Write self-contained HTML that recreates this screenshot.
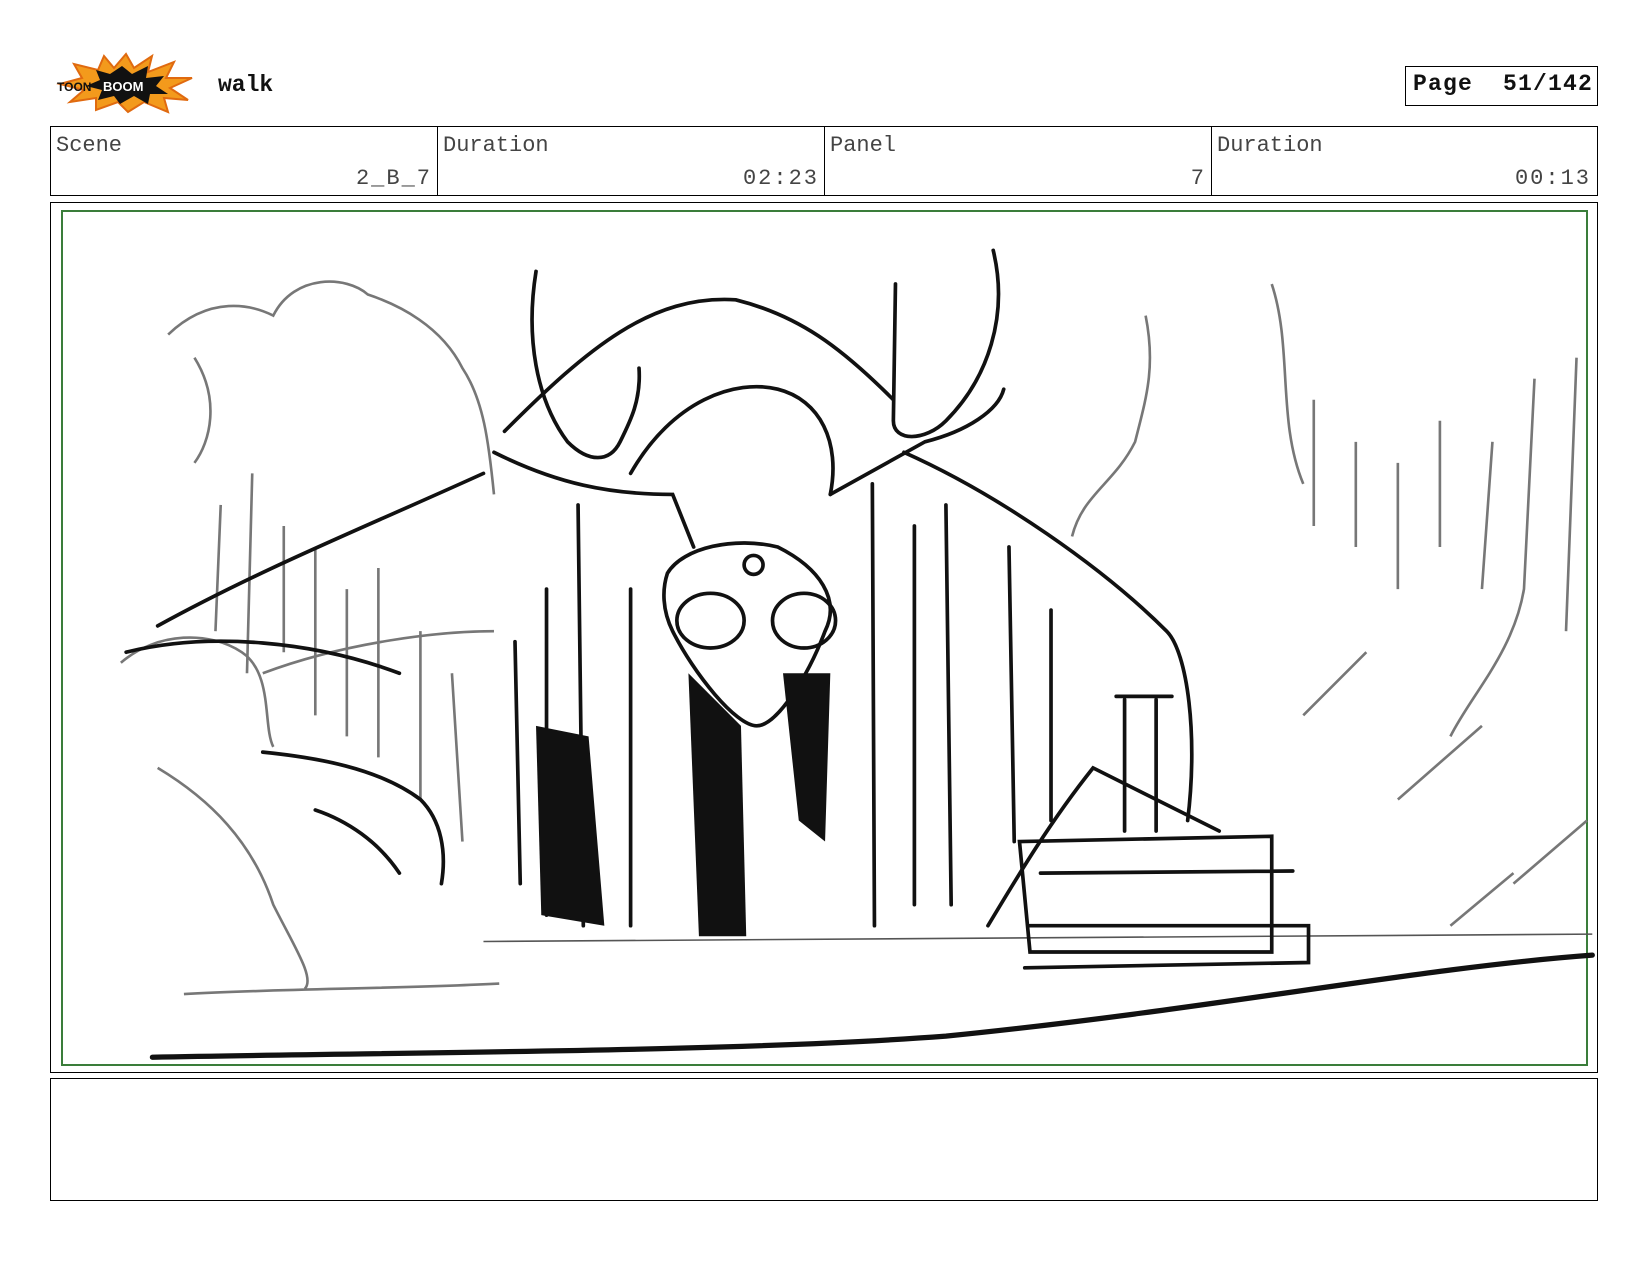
<!DOCTYPE html>
<html><head><meta charset="utf-8"><style>
*{margin:0;padding:0;box-sizing:border-box}
body{width:1648px;height:1276px;background:#fff;position:relative;overflow:hidden;font-family:"Liberation Mono",monospace;color:#222}
.abs{position:absolute}
.cell{position:absolute;top:126px;height:70px;border:1.5px solid #000;border-right:none}
.lbl{position:absolute;left:5px;top:6px;font-size:22px;color:#444}
.val{position:absolute;right:6px;bottom:4px;font-size:22px;color:#444;letter-spacing:2px}
</style></head><body>
<svg class="abs" style="left:56px;top:52px" width="140" height="62" viewBox="0 0 140 62">
<polygon points="70,2 78,16 96,4 92,20 118,10 110,26 136,26 114,36 132,48 108,46 112,60 88,50 72,60 62,50 40,58 40,46 14,50 28,38 4,32 26,26 18,12 42,18 48,4 58,16" fill="#f39a1c" stroke="#e06a10" stroke-width="2"/>
<polygon points="66,14 76,22 92,14 90,26 108,24 100,34 112,42 94,42 92,52 78,44 64,52 58,44 42,48 46,38 30,34 44,28 40,18 54,22" fill="#111"/>
<text x="1" y="39" font-family="Liberation Sans" font-weight="bold" font-size="12" fill="#111">TOON</text>
<text x="47" y="39" font-family="Liberation Sans" font-weight="bold" font-size="13" fill="#fff">BOOM</text>
</svg>
<div class="abs" style="left:218px;top:72px;font-size:23px;font-weight:bold;color:#111">walk</div>
<div class="abs" style="left:1405px;top:66px;width:193px;height:40px;border:1.5px solid #000;font-size:23px;font-weight:bold;padding:4px 0 0 7px;white-space:pre;color:#111;letter-spacing:1.2px">Page  51/142</div>
<div class="cell" style="left:50px;width:388px"><span class="lbl">Scene</span><span class="val">2_B_7</span></div>
<div class="cell" style="left:437px;width:388px"><span class="lbl">Duration</span><span class="val">02:23</span></div>
<div class="cell" style="left:824px;width:388px"><span class="lbl">Panel</span><span class="val">7</span></div>
<div class="cell" style="left:1211px;width:387px;border-right:1.5px solid #000"><span class="lbl">Duration</span><span class="val">00:13</span></div>
<div class="abs" style="left:50px;top:202px;width:1548px;height:871px;border:1.5px solid #000"></div>
<div class="abs" style="left:61px;top:210px;width:1527px;height:856px;border:2px solid #3a7d3a"></div>
<div class="abs" style="left:50px;top:1078px;width:1548px;height:123px;border:1.5px solid #000"></div>
<svg class="abs" style="left:0;top:0" width="1648" height="1276" viewBox="0 0 1568 1213" preserveAspectRatio="none">
<g fill="none" stroke="#777" stroke-width="2.5">
<path d="M160 318 C200 280 240 290 260 300 C280 260 330 262 350 280 C380 290 420 310 440 350 C460 380 465 420 470 470"/>
<path d="M185 340 C210 380 200 420 185 440"/>
<path d="M115 630 C150 600 200 600 230 620 C260 640 250 690 260 710"/>
<path d="M150 730 C200 760 240 800 260 860 C280 900 300 930 290 940"/>
<path d="M175 945 C260 940 380 940 475 935"/>
<path d="M250 640 C330 610 420 600 470 600"/>
<path d="M210 480 L205 600 M240 450 L235 640 M270 500 L270 620 M300 520 L300 680 M330 560 L330 700 M360 540 L360 720 M400 600 L400 760 M430 640 L440 800"/>
<path d="M1210 270 C1230 330 1215 400 1240 460 M1250 380 L1250 500 M1290 420 L1290 520 M1330 440 L1330 560 M1370 400 L1370 520 M1420 420 L1410 560 M1460 360 L1450 560 C1440 620 1400 660 1380 700 M1500 340 L1490 600"/>
<path d="M1090 300 C1100 350 1090 380 1080 420 C1060 460 1030 470 1020 510"/>
<path d="M1240 680 L1300 620 M1330 760 L1410 690 M1380 880 L1440 830 M1440 840 L1510 780"/>
<path d="M460 895 L1515 888" stroke="#555" stroke-width="1.5"/>
</g>
<g fill="none" stroke="#111" stroke-width="3.5" stroke-linecap="round">
<path d="M145 1005 C400 1000 700 1000 900 985 C1150 960 1350 920 1515 908" stroke-width="5"/>
<path d="M510 258 C500 320 510 380 540 420 C560 440 580 440 590 420 C600 400 610 380 608 350"/>
<path d="M945 238 C960 300 940 360 900 400 C880 420 850 420 850 400 L852 270"/>
<path d="M480 410 C560 330 620 280 700 285 C760 300 800 330 850 380"/>
<path d="M470 430 C530 460 580 470 640 470 L660 520 M790 470 L880 420 C920 410 950 390 955 370"/>
<path d="M600 450 C640 380 700 360 740 370 C780 380 800 420 790 470"/>
<path d="M635 545 C650 520 700 510 740 520 C780 540 800 570 785 600 C770 640 740 690 720 690 C700 690 660 640 640 600 C630 580 630 560 635 545Z"/>
<ellipse cx="676" cy="590" rx="32" ry="26"/>
<ellipse cx="765" cy="590" rx="30" ry="26"/>
<circle cx="717" cy="537" r="9"/>
<path d="M860 430 C950 470 1050 540 1110 600 C1130 620 1140 700 1130 780"/>
<path d="M150 595 C250 540 350 500 460 450 M120 620 C200 600 300 610 380 640"/>
<path d="M250 715 C300 720 360 730 400 760 C420 780 425 810 420 840 M300 770 C330 780 360 800 380 830"/>
<path d="M520 560 L520 870 M550 480 L555 880 M600 560 L600 880 M830 460 L832 880 M870 500 L870 860 M900 480 L905 860 M960 520 L965 800 M1000 580 L1000 780 M490 610 L495 840"/>
<path d="M1070 665 L1070 790 M1100 665 L1100 790 M1062 662 L1115 662"/>
<path d="M970 800 L1210 795 L1210 905 L980 905 Z M975 920 L1245 915 L1245 880 L980 880 M990 830 L1230 828"/>
<path d="M940 880 C970 830 1000 780 1040 730 L1160 790"/>
</g>
<g fill="#111">
<path d="M655 640 L705 690 L710 890 L665 890 Z"/>
<path d="M510 690 L560 700 L575 880 L515 870 Z"/>
<path d="M745 640 L790 640 L785 800 L760 780 Z"/>
</g>
</svg>
</body></html>
